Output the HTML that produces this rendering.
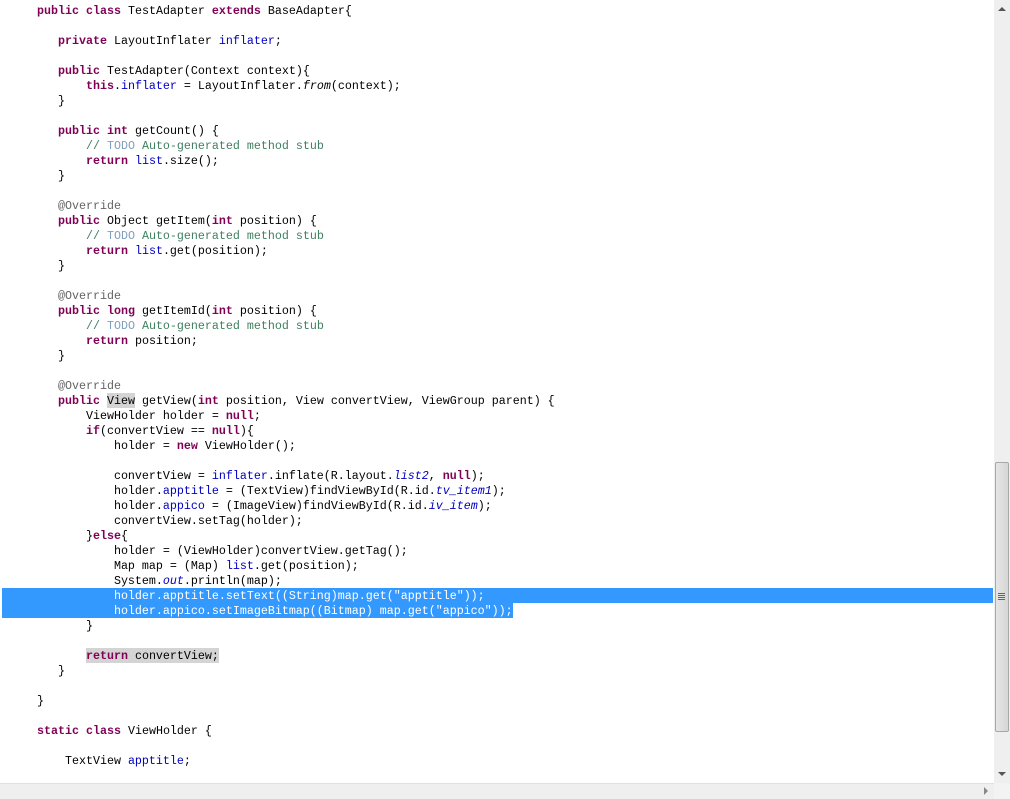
<!DOCTYPE html>
<html><head><meta charset="utf-8"><style>
html,body{margin:0;padding:0;background:#fff;width:1010px;height:799px;overflow:hidden;position:relative}
pre{position:absolute;left:0;top:4px;margin:0;padding-left:37px;font-family:"Liberation Mono",monospace;font-size:11.67px;line-height:15px;color:#000;z-index:2}
.k{color:#7f0055;font-weight:bold}
.f{color:#0000c0}
.c{color:#3f7f5f}
.t{color:#7f9fbf}
.a{color:#646464}
.i{font-style:italic}
.fi{color:#0000c0;font-style:italic}
.w{color:#fff}
.w span{color:#fff}
.sel{position:absolute;background:#3399ff;height:15px;z-index:1}
.gr{position:absolute;background:#d4d4d4;height:15px;z-index:1}
.vs{position:absolute;left:994px;top:0;width:16px;height:783px;background:#efefef}
.hs{position:absolute;left:0;top:783px;width:994px;height:16px;background:#efefef;border-top:1px solid #e0e0e0;box-sizing:border-box}
.corner{position:absolute;left:994px;top:783px;width:16px;height:16px;background:#f3f3f3}
.thumb{position:absolute;left:995px;top:462px;width:14px;height:270px;background:linear-gradient(to right,#e6e6e6,#d6d6d6);border:1px solid #a8a8a8;border-radius:2px;box-sizing:border-box}
</style></head><body>
<div class="sel" style="left:2px;top:588px;width:991px"></div>
<div class="sel" style="left:2px;top:603px;width:511px"></div>
<div class="gr" style="left:107px;top:393px;width:28px"></div>
<div class="gr" style="left:86px;top:648px;width:133px"></div>
<pre><span class="k">public</span> <span class="k">class</span> TestAdapter <span class="k">extends</span> BaseAdapter{

   <span class="k">private</span> LayoutInflater <span class="f">inflater</span>;

   <span class="k">public</span> TestAdapter(Context context){
       <span class="k">this</span>.<span class="f">inflater</span> = LayoutInflater.<span class="i">from</span>(context);
   }

   <span class="k">public</span> <span class="k">int</span> getCount() {
       <span class="c">// </span><span class="t">TODO</span><span class="c"> Auto-generated method stub</span>
       <span class="k">return</span> <span class="f">list</span>.size();
   }

   <span class="a">@Override</span>
   <span class="k">public</span> Object getItem(<span class="k">int</span> position) {
       <span class="c">// </span><span class="t">TODO</span><span class="c"> Auto-generated method stub</span>
       <span class="k">return</span> <span class="f">list</span>.get(position);
   }

   <span class="a">@Override</span>
   <span class="k">public</span> <span class="k">long</span> getItemId(<span class="k">int</span> position) {
       <span class="c">// </span><span class="t">TODO</span><span class="c"> Auto-generated method stub</span>
       <span class="k">return</span> position;
   }

   <span class="a">@Override</span>
   <span class="k">public</span> View getView(<span class="k">int</span> position, View convertView, ViewGroup parent) {
       ViewHolder holder = <span class="k">null</span>;
       <span class="k">if</span>(convertView == <span class="k">null</span>){
           holder = <span class="k">new</span> ViewHolder();

           convertView = <span class="f">inflater</span>.inflate(R.layout.<span class="fi">list2</span>, <span class="k">null</span>);
           holder.<span class="f">apptitle</span> = (TextView)findViewById(R.id.<span class="fi">tv_item1</span>);
           holder.<span class="f">appico</span> = (ImageView)findViewById(R.id.<span class="fi">iv_item</span>);
           convertView.setTag(holder);
       }<span class="k">else</span>{
           holder = (ViewHolder)convertView.getTag();
           Map map = (Map) <span class="f">list</span>.get(position);
           System.<span class="fi">out</span>.println(map);
<span class="w">           holder.apptitle.setText((String)map.get("apptitle"));
           holder.appico.setImageBitmap((Bitmap) map.get("appico"));</span>
       }

       <span class="k">return</span> convertView;
   }

}

<span class="k">static</span> <span class="k">class</span> ViewHolder {

    TextView <span class="f">apptitle</span>;
</pre>
<div class="vs"></div>
<div style="position:absolute;left:998px;top:7px;width:0;height:0;border-left:4px solid transparent;border-right:4px solid transparent;border-bottom:4px solid #555"></div>
<div style="position:absolute;left:998px;top:772px;width:0;height:0;border-left:4px solid transparent;border-right:4px solid transparent;border-top:4px solid #555"></div>
<div class="thumb"></div>
<div style="position:absolute;left:998px;top:593px;width:7px;height:1px;background:#666;box-shadow:0 2px 0 #666,0 4px 0 #666,0 6px 0 #666"></div>
<div class="hs"></div>
<div style="position:absolute;left:984px;top:787px;width:0;height:0;border-top:4px solid transparent;border-bottom:4px solid transparent;border-left:4px solid #888"></div>
<div class="corner"></div>
</body></html>
